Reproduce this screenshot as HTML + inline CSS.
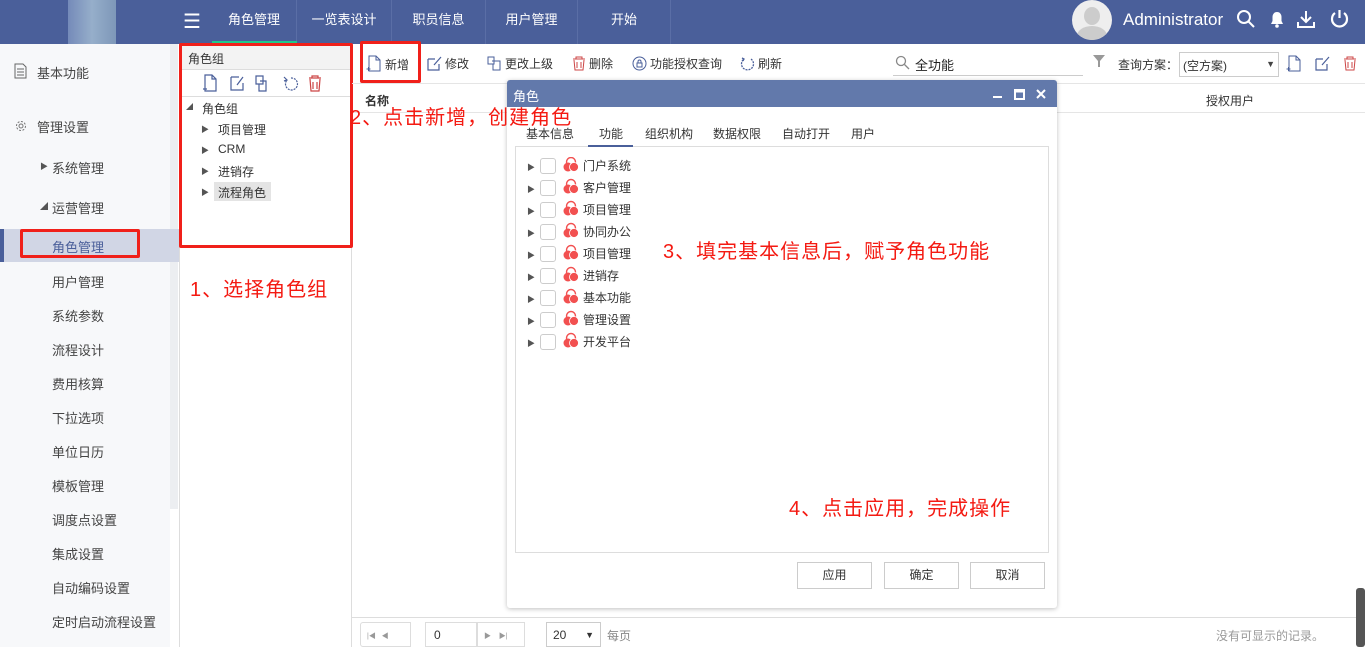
<!DOCTYPE html>
<html><head><meta charset="utf-8"><style>
*{box-sizing:border-box;margin:0;padding:0}
body{width:1365px;height:647px;overflow:hidden;background:#fff;font-family:"Liberation Sans","Noto Sans CJK SC",sans-serif;font-size:12px;color:#333;position:relative}
.a{position:absolute}
.hdr{left:0;top:0;width:1365px;height:44px;background:#4a5f9a}
.tab{top:0;height:44px;line-height:40px;color:#fff;font-size:13px;text-align:center;border-right:1px solid #5a6ea6}
.side{left:0;top:44px;width:170px;height:603px;background:#f7f8fa}
.si{left:52px;font-size:13px;color:#444}
.red{border:3px solid #f0201a;border-radius:2px}
.ann{color:#f41a12;font-size:20px;white-space:nowrap;letter-spacing:1px}
.tb{top:55px;font-size:12px;color:#333;white-space:nowrap}
.tb svg{vertical-align:-3px;margin-right:3px}
.chk{width:16px;height:16px;border:1px solid #ccc;border-radius:3px;background:#fff}
.btn{width:75px;height:27px;border:1px solid #ccc;text-align:center;line-height:25px;background:#fff;font-size:12px}
</style></head><body>
<div class="a hdr"></div>
<div class="a" style="left:68px;top:0;width:48px;height:44px;background:linear-gradient(90deg,#7f95c1,#a9c2d6,#8aa5c0);opacity:.8"></div>
<div class="a" style="left:183px;top:9px;color:#fff;font-size:20px">☰</div>
<div class="a tab" style="left:212px;width:85px">角色管理</div>
<div class="a" style="left:212px;top:41px;width:85px;height:3px;background:#1fc98c"></div>
<div class="a tab" style="left:297px;width:95px">一览表设计</div>
<div class="a tab" style="left:392px;width:94px">职员信息</div>
<div class="a tab" style="left:486px;width:92px">用户管理</div>
<div class="a tab" style="left:578px;width:93px">开始</div>
<div class="a" style="left:1072px;top:0;width:40px;height:40px;border-radius:50%;background:#eee;overflow:hidden"><div class="a" style="left:12px;top:7px;width:16px;height:18px;border-radius:50%;background:#ccc"></div><div class="a" style="left:5px;top:26px;width:30px;height:20px;border-radius:50%;background:#ccc"></div></div>
<div class="a" style="left:1123px;top:10px;color:#fff;font-size:17px">Administrator</div>
<svg class="a" style="left:1236px;top:9px" width="20" height="20" viewBox="0 0 20 20" fill="none" stroke="#fff" stroke-width="2"><circle cx="8" cy="8" r="6"/><path d="M12.5 12.5L18 18"/></svg>
<svg class="a" style="left:1269px;top:11px" width="16" height="17" viewBox="0 0 16 17"><path d="M8 1c-3 0-4.5 2.5-4.5 5v4L2 13h12l-1.5-3V6C12.5 3.5 11 1 8 1z" fill="#fff"/><circle cx="8" cy="15" r="1.8" fill="#fff"/></svg>
<svg class="a" style="left:1296px;top:9px" width="20" height="20" viewBox="0 0 20 20" fill="none" stroke="#fff" stroke-width="2"><path d="M10 2v11M5 8l5 5 5-5M2 13v5h16v-5"/></svg>
<svg class="a" style="left:1329px;top:8px" width="21" height="21" viewBox="0 0 21 21" fill="none" stroke="#fff" stroke-width="2.2"><path d="M6 5a7.5 7.5 0 1 0 9 0"/><path d="M10.5 2v8"/></svg>

<div class="a side"></div>
<div class="a" style="left:170px;top:44px;width:8px;height:465px;background:#eceef1"></div>
<svg class="a" style="left:14px;top:63px" width="13" height="16" viewBox="0 0 13 16" fill="none" stroke="#666"><path d="M1 1h8l3 3v11H1z M3 6h7M3 9h7M3 12h7"/></svg>
<div class="a" style="left:37px;top:63px;font-size:13px;color:#444">基本功能</div>
<svg class="a" style="left:15px;top:120px" width="12" height="12" viewBox="0 0 12 12" fill="none" stroke="#777"><circle cx="6" cy="6" r="2"/><circle cx="6" cy="6" r="4.5" stroke-dasharray="2 1.5"/></svg>
<div class="a" style="left:37px;top:117px;font-size:13px;color:#444">管理设置</div>
<div class="a" style="left:40px;top:161px;font-size:8px;color:#555">▶</div>
<div class="a si" style="top:158px">系统管理</div>
<div class="a" style="left:40px;top:201px;font-size:8px;color:#555">◢</div>
<div class="a si" style="top:198px">运营管理</div>
<div class="a" style="left:0;top:229px;width:180px;height:33px;background:#d1d6e5"></div>
<div class="a" style="left:0;top:229px;width:4px;height:33px;background:#4a5f9a"></div>
<div class="a red" style="left:20px;top:229px;width:120px;height:29px"></div>
<div class="a si" style="top:237px;color:#4a5f9a">角色管理</div>
<div class="a si" style="top:272px">用户管理</div>
<div class="a si" style="top:306px">系统参数</div>
<div class="a si" style="top:340px">流程设计</div>
<div class="a si" style="top:374px">费用核算</div>
<div class="a si" style="top:408px">下拉选项</div>
<div class="a si" style="top:442px">单位日历</div>
<div class="a si" style="top:476px">模板管理</div>
<div class="a si" style="top:510px">调度点设置</div>
<div class="a si" style="top:544px">集成设置</div>
<div class="a si" style="top:578px">自动编码设置</div>
<div class="a si" style="top:612px">定时启动流程设置</div>

<div class="a" style="left:179px;top:44px;width:1px;height:603px;background:#ddd"></div>
<div class="a" style="left:351px;top:44px;width:1px;height:603px;background:#ddd"></div>
<div class="a" style="left:181px;top:46px;width:169px;height:24px;background:#f3f3f3;border-bottom:1px solid #ddd"></div>
<div class="a" style="left:188px;top:50px">角色组</div>
<div class="a" style="left:181px;top:96px;width:169px;height:1px;background:#ddd"></div>
<svg class="a" style="left:202px;top:74px" width="130" height="18" viewBox="0 0 130 18" fill="none" stroke="#4a5f9a" stroke-width="1.2">
<path d="M3 1h7l4 4v12H3zM10 1v4h4M1 15h4M3 13v4"/>
<path d="M29 3h8M29 3v13h12V9M35 11l6-8"/>
<path d="M54 2h7v8h-7zM58 7h6v10h-7v-7"/>
<path d="M89 4a6 6 0 1 1-4 2" stroke-dasharray="2 1"/><path d="M82 3l3 3-3 1"/>
<path d="M107 4h12M110 4V2h6v2M108 5l1 12h8l1-12M111 8v7M115 8v7" stroke="#c44"/>
</svg>
<div class="a red" style="left:179px;top:43px;width:174px;height:205px"></div>
<div class="a" style="left:186px;top:102px;font-size:7px;color:#555">◢</div>
<div class="a" style="left:202px;top:100px">角色组</div>
<div class="a" style="left:201px;top:124px;font-size:8px;color:#555">▶</div><div class="a" style="left:218px;top:121px">项目管理</div>
<div class="a" style="left:201px;top:145px;font-size:8px;color:#555">▶</div><div class="a" style="left:218px;top:142px">CRM</div>
<div class="a" style="left:201px;top:166px;font-size:8px;color:#555">▶</div><div class="a" style="left:218px;top:163px">进销存</div>
<div class="a" style="left:201px;top:187px;font-size:8px;color:#555">▶</div><div class="a" style="left:214px;top:182px;width:57px;height:19px;background:#e4e4e4"></div><div class="a" style="left:218px;top:184px">流程角色</div>
<div class="a ann" style="left:190px;top:273px">1、选择角色组</div>

<div class="a" style="left:352px;top:83px;width:1013px;height:1px;background:#e5e5e5"></div>
<div class="a" style="left:352px;top:112px;width:1013px;height:1px;background:#e5e5e5"></div>
<div class="a tb" style="left:366px"><svg width="16" height="17" viewBox="0 0 16 17" fill="none" stroke="#4a5f9a"><path d="M3 1h7l4 4v11H3zM10 1v4h4M0.5 14h4M2.5 12v4"/></svg>新增</div>
<div class="a red" style="left:360px;top:41px;width:61px;height:42px"></div>
<div class="a tb" style="left:427px"><svg width="15" height="15" viewBox="0 0 15 15" fill="none" stroke="#4a5f9a" stroke-width="1.2"><path d="M1 3h7M1 3v11h11V8M7 9l7-8"/></svg>修改</div>
<div class="a tb" style="left:487px"><svg width="15" height="15" viewBox="0 0 15 15" fill="none" stroke="#4a5f9a"><path d="M1 1h6v7H1zM5 5h8v9H6v-6"/></svg>更改上级</div>
<div class="a tb" style="left:572px"><svg width="14" height="15" viewBox="0 0 14 15" fill="none" stroke="#c44"><path d="M1 3h12M4 3V1h6v2M2 4l1 10h8l1-10M5 6v6M9 6v6"/></svg>删除</div>
<div class="a tb" style="left:632px"><svg width="15" height="15" viewBox="0 0 15 15" fill="none" stroke="#4a5f9a"><circle cx="7.5" cy="7.5" r="6.5"/><rect x="5" y="7" width="5" height="4"/><path d="M6 7V5.5a1.5 1.5 0 0 1 3 0V7"/></svg>功能授权查询</div>
<div class="a tb" style="left:740px"><svg width="15" height="15" viewBox="0 0 15 15" fill="none" stroke="#4a5f9a" stroke-width="1.3"><path d="M11 3a6 6 0 1 1-7 0" stroke-dasharray="2 1"/><path d="M2 2l2 1-1 2"/></svg>刷新</div>
<svg class="a" style="left:895px;top:55px" width="15" height="15" viewBox="0 0 15 15" fill="none" stroke="#888" stroke-width="1.3"><circle cx="6" cy="6" r="4.5"/><path d="M9.5 9.5L14 14"/></svg>
<div class="a" style="left:915px;top:55px;font-size:13px;color:#222">全功能</div>
<div class="a" style="left:893px;top:75px;width:190px;height:1px;background:#ccc"></div>
<svg class="a" style="left:1093px;top:55px" width="12" height="12" viewBox="0 0 12 12"><path d="M0 0h12L7 6v6H5V6z" fill="#999"/></svg>
<div class="a" style="left:1118px;top:56px">查询方案：</div>
<div class="a" style="left:1179px;top:52px;width:100px;height:25px;border:1px solid #ccc;padding:4px 3px">(空方案)<span style="float:right;font-size:9px;color:#444;margin-top:2px">▼</span></div>
<svg class="a" style="left:1286px;top:55px" width="16" height="17" viewBox="0 0 16 17" fill="none" stroke="#4a5f9a"><path d="M3 1h7l4 4v11H3zM10 1v4h4M0.5 14h4M2.5 12v4"/></svg>
<svg class="a" style="left:1315px;top:56px" width="15" height="15" viewBox="0 0 15 15" fill="none" stroke="#4a5f9a" stroke-width="1.2"><path d="M1 3h7M1 3v11h11V8M7 9l7-8"/></svg>
<svg class="a" style="left:1343px;top:56px" width="14" height="15" viewBox="0 0 14 15" fill="none" stroke="#c44"><path d="M1 3h12M4 3V1h6v2M2 4l1 10h8l1-10M5 6v6M9 6v6"/></svg>
<div class="a" style="left:365px;top:92px;font-weight:bold;font-size:12px">名称</div>
<div class="a" style="left:1206px;top:92px;font-size:12px;color:#333">授权用户</div>

<div class="a" style="left:507px;top:80px;width:550px;height:528px;background:#fff;box-shadow:0 1px 5px rgba(0,0,0,.25);border-radius:3px"></div>
<div class="a" style="left:507px;top:80px;width:550px;height:27px;background:#6279ab;border-radius:3px 3px 0 0"></div>
<div class="a" style="left:513px;top:86px;color:#fff;font-size:13px">角色</div>
<svg class="a" style="left:990px;top:87px" width="60" height="14" viewBox="0 0 60 14" stroke="#fff" fill="none" stroke-width="2"><path d="M3 10h9"/><rect x="25" y="3" width="9" height="9"/><path d="M25 4h9" stroke-width="3"/><path d="M47 3l8 8M55 3l-8 8"/></svg>
<div class="a" style="left:515px;top:146px;width:534px;height:407px;border:1px solid #ddd"></div>
<div class="a" style="left:526px;top:125px">基本信息</div>
<div class="a" style="left:599px;top:125px">功能</div>
<div class="a" style="left:588px;top:145px;width:45px;height:2px;background:#4a5f9a"></div>
<div class="a" style="left:645px;top:125px">组织机构</div>
<div class="a" style="left:713px;top:125px">数据权限</div>
<div class="a" style="left:782px;top:125px">自动打开</div>
<div class="a" style="left:851px;top:125px">用户</div>
<div class="a" style="left:527px;top:157px;line-height:22px;font-size:8px;color:#555">▶<br>▶<br>▶<br>▶<br>▶<br>▶<br>▶<br>▶<br>▶</div>
<div class="a chk" style="left:540px;top:158px"></div><div class="a chk" style="left:540px;top:180px"></div><div class="a chk" style="left:540px;top:202px"></div><div class="a chk" style="left:540px;top:224px"></div><div class="a chk" style="left:540px;top:246px"></div><div class="a chk" style="left:540px;top:268px"></div><div class="a chk" style="left:540px;top:290px"></div><div class="a chk" style="left:540px;top:312px"></div><div class="a chk" style="left:540px;top:334px"></div>
<svg class="a" style="left:563px;top:157px" width="16" height="200" viewBox="0 0 16 200">
<defs><g id="ic"><circle cx="8" cy="5" r="4.5" fill="#fff" stroke="#f25050" stroke-width="1.4"/><circle cx="5" cy="10" r="4.5" fill="#f25050"/><circle cx="11" cy="10" r="4.5" fill="#f25050" stroke="#fff" stroke-width=".8"/></g></defs>
<use href="#ic" y="0"/><use href="#ic" y="22"/><use href="#ic" y="44"/><use href="#ic" y="66"/><use href="#ic" y="88"/><use href="#ic" y="110"/><use href="#ic" y="132"/><use href="#ic" y="154"/><use href="#ic" y="176"/></svg>
<div class="a" style="left:583px;top:155px;line-height:22px;font-size:12px">门户系统<br>客户管理<br>项目管理<br>协同办公<br>项目管理<br>进销存<br>基本功能<br>管理设置<br>开发平台</div>
<div class="a ann" style="left:663px;top:235px">3、填完基本信息后，赋予角色功能</div>
<div class="a ann" style="left:789px;top:492px">4、点击应用，完成操作</div>
<div class="a btn" style="left:797px;top:562px">应用</div>
<div class="a btn" style="left:884px;top:562px">确定</div>
<div class="a btn" style="left:970px;top:562px">取消</div>
<div class="a ann" style="left:350px;top:101px">2、点击新增，创建角色</div>

<div class="a" style="left:352px;top:617px;width:1013px;height:1px;background:#ddd"></div>
<div class="a" style="left:360px;top:622px;width:51px;height:25px;border:1px solid #ddd;border-radius:3px 0 0 3px;font-size:7px;color:#999;padding:8px 6px;white-space:nowrap">|◀&nbsp;&nbsp; ◀</div>
<div class="a" style="left:425px;top:622px;width:52px;height:25px;border:1px solid #ddd;padding:5px 8px">0</div>
<div class="a" style="left:477px;top:622px;width:48px;height:25px;border:1px solid #ddd;font-size:7px;color:#999;padding:8px 6px;white-space:nowrap">▶&nbsp;&nbsp;&nbsp; ▶|</div>
<div class="a" style="left:546px;top:622px;width:55px;height:25px;border:1px solid #ccc;padding:5px 6px">20<span style="float:right;font-size:9px;margin-top:2px">▼</span></div>
<div class="a" style="left:607px;top:627px;color:#888">每页</div>
<div class="a" style="left:1216px;top:627px;color:#999">没有可显示的记录。</div>
<div class="a" style="left:1356px;top:588px;width:9px;height:59px;background:#555;border-radius:3px"></div>
</body></html>
